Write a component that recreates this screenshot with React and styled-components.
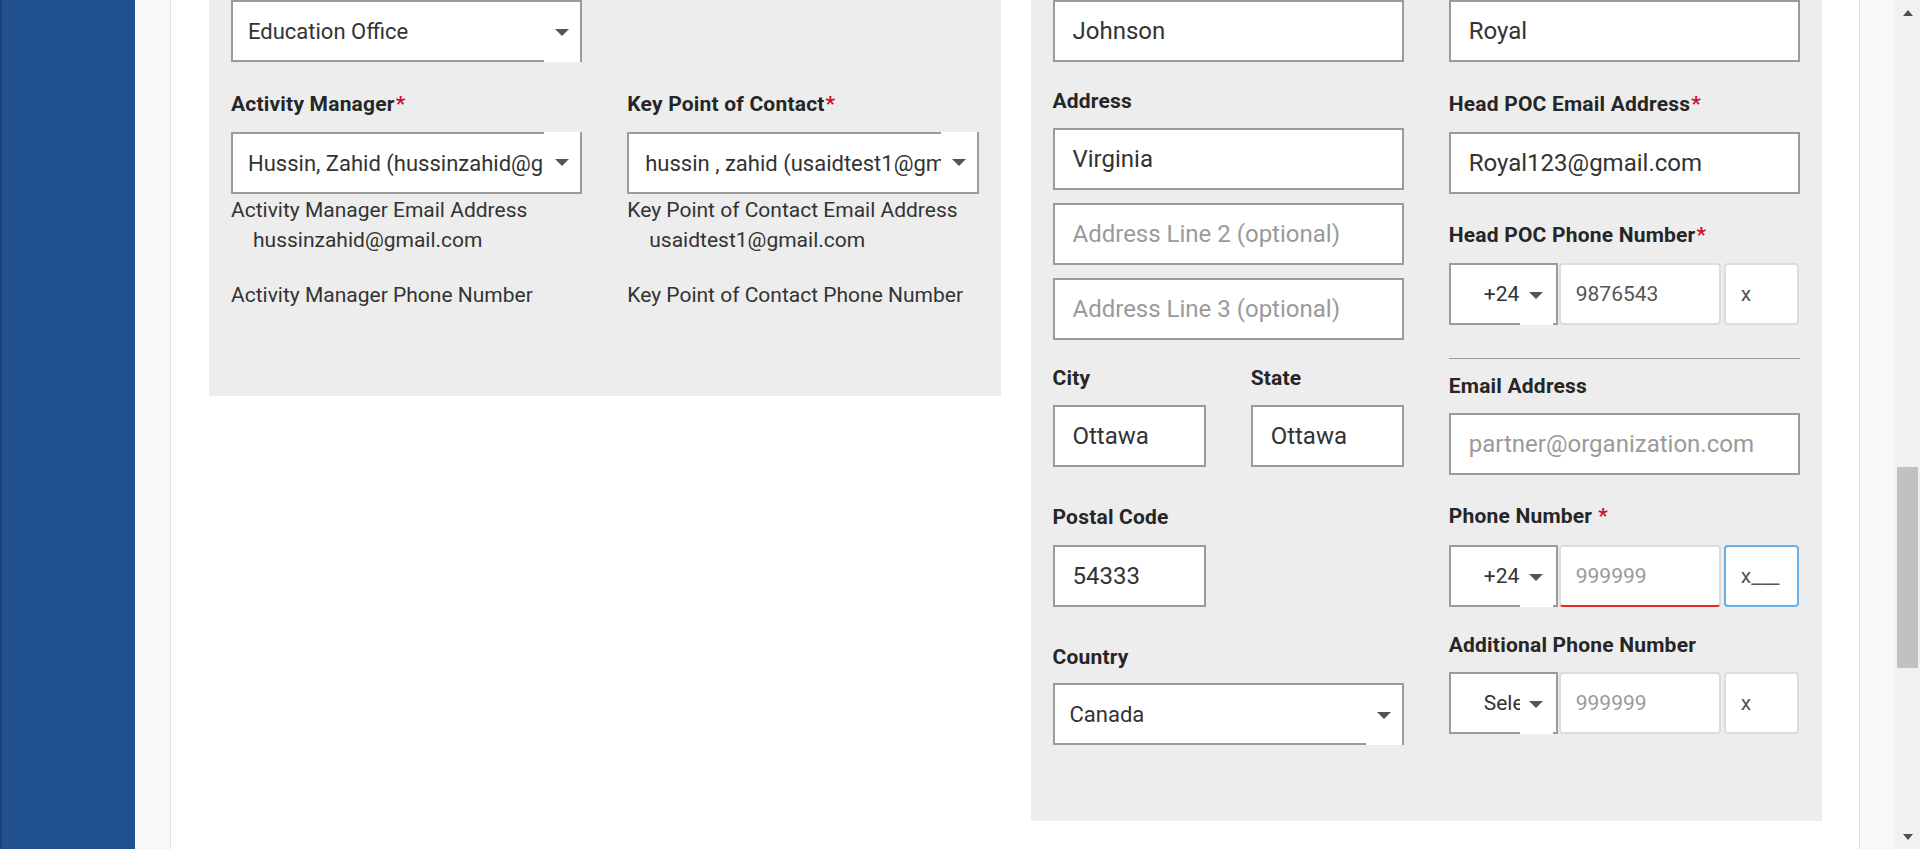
import React from 'react';
import styled, { createGlobalStyle } from 'styled-components';

const GlobalStyle = createGlobalStyle`
  * { box-sizing: border-box; }
  html, body { margin: 0; padding: 0; height: 849px; overflow: hidden; }
  body {
    font-family: Roboto, "Liberation Sans", sans-serif;
    color: #333;
    background: #f8f8f8;
  }
`;

const Page = styled.div`
  display: flex;
  height: 849px;
  overflow: hidden;
`;

const Sidebar = styled.aside`
  width: 135px;
  flex: none;
  background: #21528f;
  border-left: 2px solid #1a4379;
`;

const Main = styled.main`
  flex: 1;
  min-width: 0;
  background: #f8f8f8;
  padding: 0 35px;
`;

const Card = styled.section`
  height: 100%;
  background: #fff;
  border-left: 1px solid #e2e2e2;
  border-right: 1px solid #e2e2e2;
  padding: 0 37px 0 38px;
  display: grid;
  grid-template-columns: 1fr 1fr;
  column-gap: 30px;
  align-items: start;
`;

const Panel = styled.div`
  background: #ededed;
  padding: 0 22px ${p => p.$pb}px;
  display: grid;
  grid-template-columns: 1fr 1fr;
  column-gap: 45px;
  align-items: start;
`;

const Column = styled.div`
  display: flex;
  flex-direction: column;
  min-width: 0;
`;

const Label = styled.label`
  display: block;
  font-size: 21px;
  font-weight: 700;
  line-height: 30px;
  letter-spacing: 0.2px;
  color: #262626;
  white-space: nowrap;
  margin: ${p => p.$mt || 0}px 0 ${p => (p.$mb ?? 12)}px;
`;

const Req = styled.span`
  color: #c8102e;
  margin-left: ${p => (p.$spaced ? 6 : 1)}px;
`;

const TextInput = styled.input`
  display: block;
  width: 100%;
  height: 62px;
  margin: ${p => p.$mt || 0}px 0 0;
  border: 2px solid #9b9b9b;
  border-radius: 0;
  background: #fff;
  padding: 0 18px;
  font: 400 24px Roboto, "Liberation Sans", sans-serif;
  color: #333;
  outline: none;
  &::placeholder { color: #9a9a9a; }
`;

const SelectBox = styled.div`
  position: relative;
  display: flex;
  align-items: center;
  height: 62px;
  border: 2px solid #9b9b9b;
  background: #fff;
  padding-left: ${p => p.$pl || 15}px;
  font-size: 22px;
  color: #333;
`;

const SelectText = styled.span`
  flex: 1;
  min-width: 0;
  overflow: hidden;
  white-space: nowrap;
`;

const ArrowBox = styled.span`
  position: absolute;
  right: ${p => p.$r || 0}px;
  width: ${p => p.$w || 36}px;
  top: ${p => (p.$cut === 'top' ? '-2px' : '0')};
  bottom: ${p => (p.$cut === 'bottom' ? '-2px' : '0')};
  background: #fff;
  display: flex;
  align-items: center;
  justify-content: center;
  &::after {
    content: '';
    border-left: 7px solid transparent;
    border-right: 7px solid transparent;
    border-top: 7px solid #555;
  }
`;

const Desc = styled.p`
  margin: ${p => p.$mt || 0}px 0 0;
  padding-left: ${p => (p.$indent ? 22 : 0)}px;
  font-size: 21px;
  line-height: 30px;
  color: #333;
  white-space: nowrap;
`;

const Pair = styled.div`
  display: grid;
  grid-template-columns: 1fr 1fr;
  column-gap: 45px;
  margin-top: ${p => p.$mt || 0}px;
`;

const Divider = styled.hr`
  border: 0;
  height: 1px;
  background: #9a9a9a;
  margin: ${p => p.$mt}px 0 0;
`;

const PhoneRow = styled.div`
  display: flex;
  height: 62px;
`;

const CodeSelect = styled(SelectBox)`
  width: 109px;
  flex: none;
  font-size: 21px;
  padding-left: 33px;
`;

const CodeText = styled.span`
  width: 36px;
  overflow: hidden;
  white-space: nowrap;
`;

const NumInput = styled.input`
  width: 162px;
  flex: none;
  height: 100%;
  margin-left: 1px;
  border: 2px solid #dcdcdc;
  border-radius: 4px;
  background: #fff;
  padding: 0 15px;
  font: 400 21px Roboto, "Liberation Sans", sans-serif;
  color: #555;
  outline: none;
  ${p => p.$error && 'border-bottom-color: #e02828;'}
  &::placeholder { color: #9a9a9a; }
`;

const ExtInput = styled(NumInput)`
  width: 75px;
  margin-left: 3px;
  ${p => p.$focus && 'border-color: #66afe9;'}
`;

const ScrollTrack = styled.div`
  width: 25px;
  flex: none;
  background: #f1f1f1;
  display: flex;
  flex-direction: column;
  align-items: center;
`;

const ScrollArrow = styled.div`
  width: 100%;
  height: 25px;
  flex: none;
  display: flex;
  align-items: center;
  justify-content: center;
  &::after {
    content: '';
    border-left: 5.5px solid transparent;
    border-right: 5.5px solid transparent;
    ${p => (p.$down ? 'border-top: 6px solid #505050;' : 'border-bottom: 6px solid #505050;')}
  }
`;

const ScrollBody = styled.div`
  flex: 1;
  width: 100%;
  display: flex;
  justify-content: center;
`;

const ScrollThumb = styled.div`
  width: 21px;
  height: 201px;
  margin-top: 442px;
  background: #c1c1c1;
`;

const SelectSpacer = styled.div`
  height: 62px;
`;

function Select({ value, cut, pl }) {
  return (
    <SelectBox $pl={pl}>
      <SelectText>{value}</SelectText>
      <ArrowBox $cut={cut} />
    </SelectBox>
  );
}

function Phone({ code, number, numPlaceholder, ext, error, focus }) {
  return (
    <PhoneRow>
      <CodeSelect>
        <CodeText>{code}</CodeText>
        <ArrowBox $cut="bottom" $w={33} $r={3} />
      </CodeSelect>
      <NumInput defaultValue={number} placeholder={numPlaceholder} $error={error} />
      <ExtInput defaultValue={ext} $focus={focus} />
    </PhoneRow>
  );
}

export default function App() {
  return (
    <Page>
      <GlobalStyle />
      <Sidebar />
      <Main>
        <Card>
          <Panel $pb={86}>
            <Column>
              <Select value="Education Office" cut="bottom" pl={15} />
              <Label $mt={27} $mb={13}>Activity Manager<Req>*</Req></Label>
              <Select value="Hussin, Zahid (hussinzahid@gmail.com)" cut="top" pl={15} />
              <Desc $mt={1}>Activity Manager Email Address</Desc>
              <Desc $indent>hussinzahid@gmail.com</Desc>
              <Desc $mt={25}>Activity Manager Phone Number</Desc>
            </Column>
            <Column>
              <SelectSpacer />
              <Label $mt={27} $mb={13}>Key Point of Contact<Req>*</Req></Label>
              <Select value="hussin , zahid (usaidtest1@gmail.com)" cut="top" pl={16} />
              <Desc $mt={1}>Key Point of Contact Email Address</Desc>
              <Desc $indent>usaidtest1@gmail.com</Desc>
              <Desc $mt={25}>Key Point of Contact Phone Number</Desc>
            </Column>
          </Panel>

          <Panel $pb={76}>
            <Column>
              <TextInput defaultValue="Johnson" />
              <Label $mt={24}>Address</Label>
              <TextInput defaultValue="Virginia" />
              <TextInput $mt={13} placeholder="Address Line 2 (optional)" />
              <TextInput $mt={13} placeholder="Address Line 3 (optional)" />
              <Pair $mt={23}>
                <div>
                  <Label>City</Label>
                  <TextInput defaultValue="Ottawa" />
                </div>
                <div>
                  <Label>State</Label>
                  <TextInput defaultValue="Ottawa" />
                </div>
              </Pair>
              <Label $mt={35} $mb={13}>Postal Code</Label>
              <Pair>
                <TextInput defaultValue="54333" />
              </Pair>
              <Label $mt={35} $mb={11}>Country</Label>
              <Select value="Canada" cut="bottom" pl={15} />
            </Column>
            <Column>
              <TextInput defaultValue="Royal" />
              <Label $mt={27} $mb={13}>Head POC Email Address<Req>*</Req></Label>
              <TextInput defaultValue="Royal123@gmail.com" />
              <Label $mt={26} $mb={13}>Head POC Phone Number<Req>*</Req></Label>
              <Phone code="+24" number="9876543" ext="x" />
              <Divider $mt={33} />
              <Label $mt={12}>Email Address</Label>
              <TextInput placeholder="partner@organization.com" />
              <Label $mt={26} $mb={14}>Phone Number<Req $spaced>*</Req></Label>
              <Phone code="+24" numPlaceholder="999999" ext="x___" error focus />
              <Label $mt={23} $mb={12}>Additional Phone Number</Label>
              <Phone code="Select" numPlaceholder="999999" ext="x" />
            </Column>
          </Panel>
        </Card>
      </Main>
      <ScrollTrack>
        <ScrollArrow />
        <ScrollBody>
          <ScrollThumb />
        </ScrollBody>
        <ScrollArrow $down />
      </ScrollTrack>
    </Page>
  );
}
